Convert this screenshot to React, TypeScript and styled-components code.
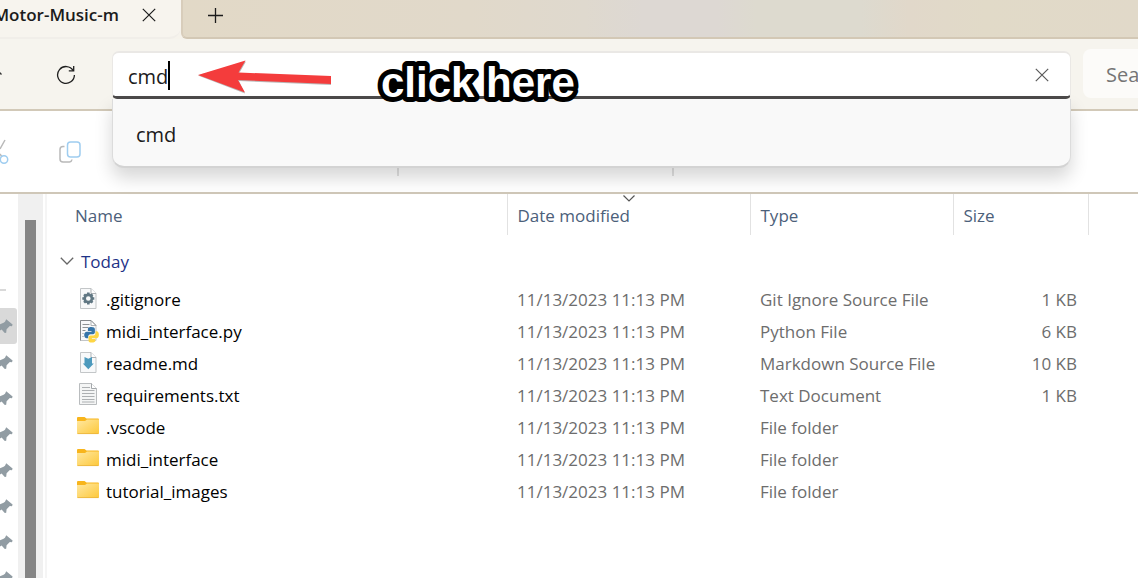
import React from "react";
import styled, { createGlobalStyle } from "styled-components";

const GlobalStyle = createGlobalStyle`
  * { box-sizing: border-box; }
  body {
    margin: 0;
    background: #fff;
    color: #1b1b1b;
    font-family: "Open Sans", "Noto Sans", sans-serif;
    font-size: 17px;
  }
  button, input { font: inherit; color: inherit; }
`;

const Window = styled.div`
  display: flex;
  flex-direction: column;
  height: 100vh;
  overflow: hidden;
`;

const TabBar = styled.header`
  display: flex;
  height: 39px;
  flex: none;
  background: #f6f3ec;
`;

const Tab = styled.div`
  display: flex;
  align-items: center;
  flex: none;
  width: 181px;
  padding-bottom: 8px;
  background: #f7f4ee;
  border-bottom: 2px solid #f1eee9;
  border-bottom-right-radius: 12px;
`;

const TabTitle = styled.span`
  display: flex;
  justify-content: flex-end;
  width: 119px;
  overflow: hidden;
  white-space: nowrap;
  font-size: 17px;
  font-weight: 600;
`;

const TabStrip = styled.div`
  display: flex;
  align-items: center;
  flex: 1;
  padding: 0 0 6px 16px;
  border-left: 2px solid #d8cdbb;
  border-bottom: 2px solid #d3c8b5;
  border-bottom-left-radius: 6px;
  background: linear-gradient(90deg, #e2d9c7 0%, #e1d9ca 30%, #dfd9ce 42%, #ddd8d3 48%, #ddd8d3 56%, #dddacf 60%, #dddacf 71%, #e1d8ca 76%, #e1dac8 84%, #e1d9c9 100%);
`;

const IconButton = styled.button`
  display: flex;
  align-items: center;
  justify-content: center;
  flex: none;
  width: 32px;
  height: 32px;
  padding: 0;
  border: 0;
  background: none;
`;

const TabClose = styled(IconButton)`
  margin-left: 14px;
`;

const NavBar = styled.nav`
  display: flex;
  align-items: center;
  flex: none;
  height: 72px;
  background: #f6f4ee;
  border-bottom: 2px solid #d2c9b8;
`;

const UpSlot = styled(IconButton)`
  width: 4px;
  justify-content: flex-end;
`;

const Refresh = styled(IconButton)`
  margin: 1px 30px 0 46px;
`;

const Address = styled.div`
  position: relative;
  z-index: 2;
  flex: 1;
  height: 48px;
  margin-top: 2px;
  border: 1px solid #eae8e5;
  border-top-width: 2px;
  border-bottom: 3px solid #4c4a4a;
  border-radius: 7px 7px 5px 5px;
  background: #fff;
  display: flex;
  align-items: center;
  padding: 0 12px 0 15px;
`;

const AddressInput = styled.input`
  field-sizing: content;
  padding: 3px 0 0;
  border: 0;
  outline: 0;
  background: none;
  caret-color: transparent;
  font-size: 20px;
`;

const Caret = styled.span`
  width: 2px;
  height: 29px;
  margin-top: 2px;
  background: #000;
`;

const ClearButton = styled(IconButton)`
  margin-left: auto;
`;

const Suggestions = styled.ul`
  position: absolute;
  top: 100%;
  left: -1px;
  right: -1px;
  margin: 3px 0 0;
  padding: 0;
  list-style: none;
  border: 1px solid #dcdcdc;
  border-top: 0;
  border-bottom: 2px solid #d3d3d3;
  border-radius: 0 0 12px 12px;
  background: #f9f9f9;
  box-shadow: 0 10px 18px rgba(0, 0, 0, 0.16);
`;

const Suggestion = styled.li`
  padding: 4px 23px 0;
  line-height: 63px;
  font-size: 20px;
`;

const Callout = styled.svg`
  position: absolute;
  top: 0;
  left: 84px;
  z-index: 3;
  pointer-events: none;
`;

const CalloutText = styled.text`
  font-family: "Liberation Sans", Arial, sans-serif;
  font-size: 42px;
  font-weight: 700;
  fill: #fff;
  stroke: #000;
  stroke-width: 10px;
  stroke-linejoin: round;
  paint-order: stroke fill;
`;

const Search = styled.input`
  flex: none;
  width: 55px;
  height: 49px;
  margin: 0 0 2px 12px;
  padding: 3px 0 0 23px;
  border: 0;
  border-radius: 8px 0 0 8px;
  background: #fcfbf9;
  color: #5f5e5b;
  font-size: 20px;
`;

const Toolbar = styled.div`
  display: flex;
  align-items: center;
  flex: none;
  height: 83px;
  background: #fff;
  border-bottom: 2px solid #cfc7b8;
`;

const CutButton = styled(IconButton)`
  width: 10px;
`;

const CopyButton = styled(IconButton)`
  margin-left: 44px;
`;

const Separator = styled.i<{ $gap: number }>`
  width: 2px;
  height: 48px;
  margin-left: ${(p) => p.$gap}px;
  background: #e2e2e2;
`;

const Body = styled.main`
  display: flex;
  flex: 1;
  min-height: 0;
`;

const Sidebar = styled.aside`
  flex: none;
  width: 18px;
  padding-top: 95px;
  overflow: hidden;
`;

const SideRule = styled.hr`
  width: 6px;
  height: 2px;
  margin: 0 0 17px;
  border: 0;
  background: #d9d9d9;
`;

const PinRow = styled.div<{ $selected?: boolean }>`
  display: flex;
  align-items: center;
  width: 17px;
  height: 36px;
  border-radius: 0 3px 3px 0;
  background: ${(p) => (p.$selected ? "#d9d9d9" : "transparent")};
`;

const ScrollTrack = styled.div`
  display: flex;
  justify-content: center;
  flex: none;
  width: 25px;
  padding: 26px 0 0;
  background: #f0f0f0;
`;

const ScrollThumb = styled.div`
  width: 11px;
  background: #858585;
`;

const Listing = styled.section`
  flex: 1;
  min-width: 0;
  margin-left: 2px;
  border-left: 2px solid #f5f5f5;
  overflow: hidden;
`;

const FileTable = styled.table`
  width: 100%;
  table-layout: fixed;
  border-collapse: collapse;
`;

const HeadCell = styled.th<{ $first?: boolean; $last?: boolean }>`
  position: relative;
  height: 41px;
  padding: 2px 9px 0 ${(p) => (p.$first ? 28 : 10)}px;
  border-right: ${(p) => (p.$last ? "0" : "1px solid #e2e2e2")};
  color: #4c607a;
  font-weight: 400;
  text-align: left;
  line-height: 24px;
`;

const SortMark = styled.svg`
  position: absolute;
  top: 1px;
  left: 50%;
  margin-left: -6px;
`;

const GroupCell = styled.th`
  height: 48px;
  padding: 4px 0 0 13px;
  text-align: left;
  font-weight: 400;
  color: #1e3287;
`;

const Line = styled.span`
  display: flex;
  align-items: center;
  gap: 7px;
`;

const Cell = styled.td<{ $right?: boolean }>`
  height: 32px;
  padding: 0 ${(p) => (p.$right ? 11 : 9)}px 0 10px;
  color: #6d6d6d;
  text-align: ${(p) => (p.$right ? "right" : "left")};
  white-space: nowrap;
`;

const NameCell = styled(Cell)`
  padding-left: 30px;
  color: #000;
`;

const Cross = ({ color }: { color: string }) => (
  <svg width="14" height="14" viewBox="0 0 14 14" stroke={color} strokeWidth="1.2" fill="none">
    <path d="M.8.8l12.4 12.4M13.2.8L.8 13.2" />
  </svg>
);

const Pin = () => (
  <svg width="13" height="16" viewBox="0 0 13 16" fill="#919ca3">
    <path d="M6.2 1.2L12.6 6.4 12 8.2 9.8 8 6.6 11.2 6.2 14.8 4.8 15 1.6 11.4 0 12.4V6.2L3.6 4.8 5 3.8Z" />
  </svg>
);

const Paper = ({ children }: { children?: React.ReactNode }) => (
  <svg width="22" height="24" viewBox="0 0 22 24" fill="none">
    <path d="M3.5 1.5h10.5l5 5v15h-15.5z" fill="#f8f9fa" stroke="#c3c6c8" />
    <path d="M14 1.5v5h5" fill="#fff" stroke="#aeb2b5" />
    {children}
  </svg>
);

const GearFile = () => (
  <Paper>
    <circle cx="11.3" cy="11.5" r="3.6" stroke="#607783" strokeWidth="2.6" />
    <path
      d="M11.3 5.5v2M11.3 15.5v2M5.3 11.5h2M15.3 11.5h2M7.1 7.3l1.4 1.4M14.1 14.3l1.4 1.4M15.5 7.3l-1.4 1.4M8.5 14.3l-1.4 1.4"
      stroke="#607783"
      strokeWidth="2.6"
    />
  </Paper>
);

const PythonFile = () => (
  <Paper>
    <path d="M3.5 21.5v-20h10.5l5 5" stroke="#85898c" />
    <path d="M5.5 5.5h7M5.5 8.5h6M5.5 11.5h3M5.5 14.5h1M5.5 17.5h1" stroke="#8e9295" />
    <path
      d="M14.3 8c-3 0-3.400 1.200-3.400 2.400v1.700h3.600v.7H9.800c-1.600 0-2.600 1.300-2.600 3.300s.9 3.200 2.400 3.200h1.600v-1.800c0-1.300 1-2.300 2.300-2.300h2.600c1.100 0 1.800-.8 1.800-1.900v-3C17.900 8.800 16.700 8 14.300 8z"
      fill="#3574a8"
    />
    <path
      d="M18.600 12.200v1.900c0 1.400-1 2.400-2.300 2.400h-2.900c-1.100 0-1.900.9-1.900 1.900v3c0 1.500 1.500 2.200 3.400 2.200 2.200 0 3.500-.8 3.500-2.200v-1.500h-3.500v-.6h4.600c1.500 0 2.400-1.300 2.400-3.500 0-2.100-.8-3.600-2.200-3.600z"
      fill="#fed644"
    />
  </Paper>
);

const MarkdownFile = () => (
  <Paper>
    <path d="M7.500 6l3.800 1.800L15 6v6.500h1.800l-5.500 5.700-5.500-5.700h1.700z" fill="#4d9abd" />
  </Paper>
);

const TextFile = () => (
  <svg width="22" height="24" viewBox="0 0 22 24" fill="none">
    <path d="M2.500 .5h12l5 5v16h-17z" fill="#f4f5f5" stroke="#b9bcbe" />
    <path d="M14.500 .5v5h5" fill="#fff" stroke="#a3a7aa" />
    <path d="M5 4.500h8M5 7.500h12.500M5 10.500h12.500M5 13.500h12.500M5 16.500h12.500M5 19h12.500" stroke="#adb0b2" />
  </svg>
);

const Folder = () => (
  <svg width="22" height="24" viewBox="0 0 22 24">
    <defs>
      <linearGradient id="folder" x1="0" y1="0" x2="1" y2="1">
        <stop offset="0" stopColor="#ffe8a2" />
        <stop offset="1" stopColor="#fdc83a" />
      </linearGradient>
    </defs>
    <path d="M0 3a1 1 0 0 1 1-1H7.500L9.500 3.500H21a1 1 0 0 1 1 1V9H0z" fill="#f8b51c" />
    <path d="M0 6h8l2-1.500h12V18a1 1 0 0 1-1 1H1a1 1 0 0 1-1-1z" fill="url(#folder)" />
    <path d="M.5 18.600h21" stroke="#e9b23b" strokeWidth=".8" />
  </svg>
);

const files = [
  { name: ".gitignore", type: "Git Ignore Source File", size: "1 KB", icon: <GearFile /> },
  { name: "midi_interface.py", type: "Python File", size: "6 KB", icon: <PythonFile /> },
  { name: "readme.md", type: "Markdown Source File", size: "10 KB", icon: <MarkdownFile /> },
  { name: "requirements.txt", type: "Text Document", size: "1 KB", icon: <TextFile /> },
  { name: ".vscode", type: "File folder", size: "", icon: <Folder /> },
  { name: "midi_interface", type: "File folder", size: "", icon: <Folder /> },
  { name: "tutorial_images", type: "File folder", size: "", icon: <Folder /> },
];

export default function App() {
  return (
    <Window>
      <GlobalStyle />
      <TabBar>
        <Tab>
          <TabTitle>Motor-Music-m</TabTitle>
          <TabClose aria-label="Close tab"><Cross color="#1b1b1b" /></TabClose>
        </Tab>
        <TabStrip>
          <IconButton aria-label="New tab">
            <svg width="15" height="15" viewBox="0 0 15 15" stroke="#1b1b1b" strokeWidth="1.3">
              <path d="M7.5 0v15M0 7.5h15" />
            </svg>
          </IconButton>
        </TabStrip>
      </TabBar>

      <NavBar>
        <UpSlot aria-label="Up">
          <svg width="4" height="6" viewBox="0 0 4 6" stroke="#333" strokeWidth="1.3" fill="none">
            <path d="M-1 1l2.500 2.500" />
          </svg>
        </UpSlot>
        <Refresh aria-label="Refresh">
          <svg width="20" height="20" viewBox="0 0 20 20" stroke="#1f1f1f" strokeWidth="1.3" fill="none">
            <path d="M17.200 5.600A8.400 8.400 0 1 0 18.400 10" />
            <path d="M17.700 1v4.900h-4.900" />
          </svg>
        </Refresh>
        <Address>
          <AddressInput aria-label="Address" defaultValue="cmd" />
          <Caret />
          <ClearButton aria-label="Clear address"><Cross color="#5a5a5a" /></ClearButton>
          <Suggestions>
            <Suggestion>cmd</Suggestion>
          </Suggestions>
          <Callout width="400" height="60" viewBox="0 0 400 60">
            <path d="M1 22.500L49 8.500 42 20.500 134 24v8L42 28l6 12.500z" fill="#8b8b8b" opacity=".6" />
            <path d="M1 22L48.500 7.500 41.500 19.500 134 23v8L41 27l7 12.500z" fill="#f43c3c" />
            <CalloutText x="184" y="44">click here</CalloutText>
          </Callout>
        </Address>
        <Search aria-label="Search" placeholder="Sea" />
      </NavBar>

      <Toolbar>
        <CutButton aria-label="Cut">
          <svg width="10" height="26" viewBox="0 0 10 26" fill="none" strokeWidth="1.5">
            <path d="M5 1L0 10M0 15l2 3" stroke="#b9b9b9" />
            <circle cx="4" cy="20.500" r="3.700" stroke="#9fcdf0" />
          </svg>
        </CutButton>
        <CopyButton aria-label="Copy">
          <svg width="22" height="22" viewBox="0 0 22 22" fill="none" strokeWidth="1.5">
            <path d="M5.500 5.500H4A3 3 0 0 0 1 8.500V18a3 3 0 0 0 3 3h6.500a3 3 0 0 0 2.500-2.500" stroke="#b9b9b9" />
            <rect x="8.500" y="1" width="12.500" height="15" rx="3" stroke="#9fcdf0" />
          </svg>
        </CopyButton>
        <Separator $gap={311} />
        <Separator $gap={273} />
      </Toolbar>

      <Body>
        <Sidebar>
          <SideRule />
          {[0, 1, 2, 3, 4, 5, 6, 7].map((i) => (
            <PinRow key={i} $selected={i === 0}><Pin /></PinRow>
          ))}
        </Sidebar>
        <ScrollTrack><ScrollThumb /></ScrollTrack>
        <Listing>
          <FileTable>
            <colgroup>
              <col style={{ width: 460 }} />
              <col style={{ width: 243 }} />
              <col style={{ width: 203 }} />
              <col style={{ width: 135 }} />
              <col />
            </colgroup>
            <thead>
              <tr>
                <HeadCell $first>Name</HeadCell>
                <HeadCell>
                  <SortMark width="12" height="7" viewBox="0 0 12 7" fill="none" stroke="#555" strokeWidth="1.2">
                    <path d="M.5.5L6 6 11.500.5" />
                  </SortMark>
                  Date modified
                </HeadCell>
                <HeadCell>Type</HeadCell>
                <HeadCell>Size</HeadCell>
                <HeadCell as="td" $last />
              </tr>
            </thead>
            <tbody>
              <tr>
                <GroupCell colSpan={5} scope="rowgroup">
                  <Line>
                    <svg width="14" height="8" viewBox="0 0 14 8" fill="none" stroke="#666" strokeWidth="1.3">
                      <path d="M.8.8L7 7 13.200.8" />
                    </svg>
                    Today
                  </Line>
                </GroupCell>
              </tr>
              {files.map((f) => (
                <tr key={f.name}>
                  <NameCell><Line>{f.icon}{f.name}</Line></NameCell>
                  <Cell>11/13/2023 11:13 PM</Cell>
                  <Cell>{f.type}</Cell>
                  <Cell $right>{f.size}</Cell>
                  <Cell />
                </tr>
              ))}
            </tbody>
          </FileTable>
        </Listing>
      </Body>
    </Window>
  );
}
